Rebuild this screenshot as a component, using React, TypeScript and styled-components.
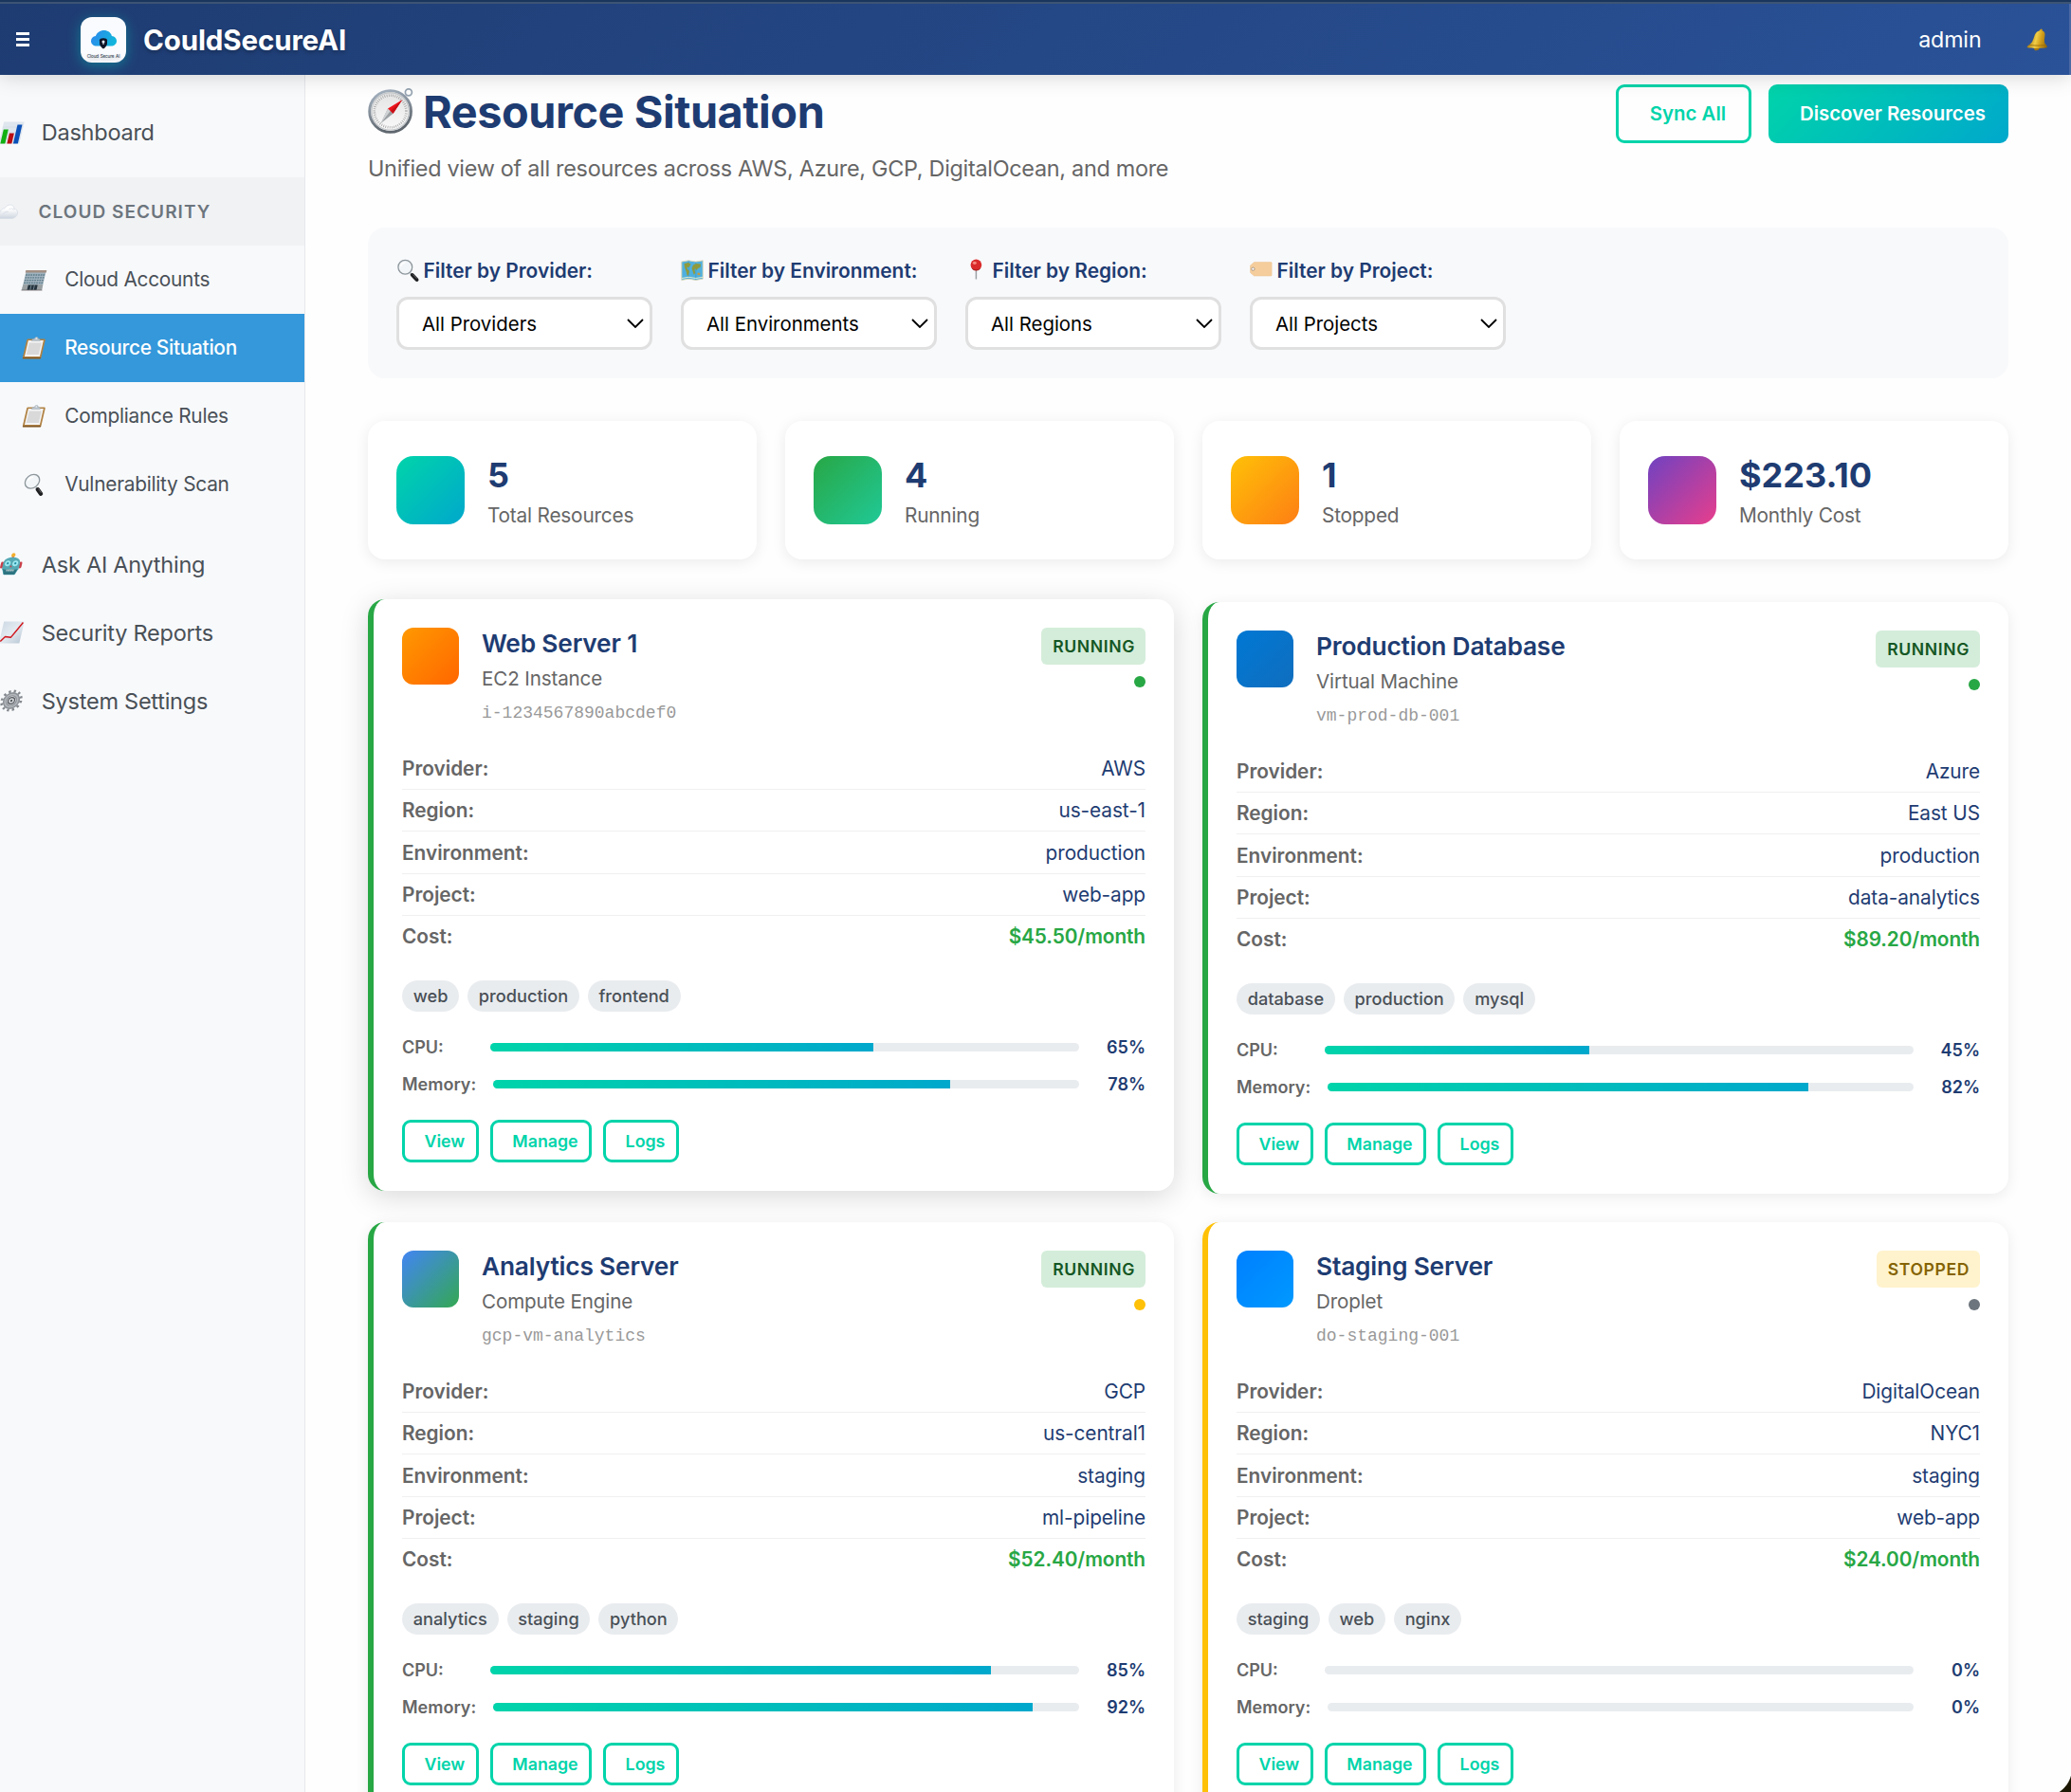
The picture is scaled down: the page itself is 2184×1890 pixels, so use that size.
import React from 'react';
import styled, { createGlobalStyle, css } from 'styled-components';

const GlobalStyle = createGlobalStyle`
  *, *::before, *::after { box-sizing: border-box; }
  html, body { margin: 0; padding: 0; }
  body {
    background: #fefefe;
    font-family: Inter, "Liberation Sans", sans-serif;
    color: #333;
    overflow: hidden;
  }
`;

const accent = '#00d4aa';
const navy = '#1e3c72';

/* ---------- Icons ---------- */

const IconSvg = styled.svg<{ $size?: number; $slant?: boolean }>`
  display: block;
  flex: none;
  width: ${(p) => p.$size ?? 24}px;
  height: ${(p) => p.$size ?? 24}px;
  overflow: visible;
  ${(p) => p.$slant && css`transform: skewX(-13deg);`}
`;

type IconProps = { slant?: boolean; size?: number };

const Chart = ({ slant, size }: IconProps) => (
  <IconSvg viewBox="0 0 24 24" $slant={slant} $size={size}>
    <rect x="1.5" y="0.5" width="21.5" height="23" fill="#dfe6ee" />
    <path d="M1.5 6h21.5M1.5 12h21.5M1.5 18h21.5" stroke="#cfd8e2" strokeWidth="0.6" />
    <rect x="3" y="8.5" width="5" height="15" fill="#12b012" />
    <rect x="10" y="12.5" width="5" height="11" fill="#b80d12" />
    <rect x="16.5" y="3.5" width="5" height="20" fill="#0a50b8" />
  </IconSvg>
);

const CloudIcon = ({ slant }: IconProps) => (
  <IconSvg viewBox="0 0 24 24" $slant={slant}>
    <defs>
      <linearGradient id="cloudFill" x1="0" y1="0" x2="0" y2="1">
        <stop offset="0.3" stopColor="#ffffff" />
        <stop offset="1" stopColor="#cdd5df" />
      </linearGradient>
    </defs>
    <path
      d="M6 19.5c-3 0-5-1.600-5-3.800 0-2 1.600-3.400 3.500-3.500 0-2.200 1.700-3.600 3.600-3.400C9 6.200 11 5 13.200 5c2.800 0 4.800 1.900 5 4.400 2.600 0 4.800 2 4.800 4.900 0 3-2.200 5.200-5.200 5.200z"
      fill="url(#cloudFill)"
      stroke="#d8dee6"
      strokeWidth="0.8"
    />
    <path d="M8 15c1-2.500 3-3.200 5-2.500M13 9.500c2-1 4-.5 5 1" fill="none" stroke="#dbe1e8" strokeWidth="0.9" />
  </IconSvg>
);

const Building = ({ slant }: IconProps) => (
  <IconSvg viewBox="0 0 24 24" $slant={slant}>
    <rect x="1.500" y="2.500" width="21" height="20.500" fill="#9fb2bd" />
    <path d="M1 2h22v2.600H1z" fill="#a39084" />
    <path d="M2 7h20M2 9.800h20M2 12.600h20M2 15.400h20" stroke="#5c7988" strokeWidth="1.300" strokeDasharray="1.700 0.900" />
    <rect x="1.500" y="17.200" width="21" height="5.800" fill="#9aa0a2" />
    <rect x="7" y="17.500" width="10" height="5.500" fill="#25343f" />
    <path d="M10.300 17.500v5.500M13.700 17.500v5.500" stroke="#8fa0aa" strokeWidth="0.700" />
    <path d="M1 23h22" stroke="#6d6a68" strokeWidth="0.800" />
  </IconSvg>
);

const Clipboard = ({ slant }: IconProps) => (
  <IconSvg viewBox="0 0 24 24" $slant={slant}>
    <rect x="2.200" y="2.500" width="19.600" height="21" rx="1.200" fill="#b08243" />
    <path d="M2.500 22.600h19" stroke="#7d5829" strokeWidth="1.300" />
    <rect x="4" y="4" width="16" height="17" fill="#f4f4f4" />
    <rect x="5.500" y="6.500" width="13" height="12.500" fill="#d9d9da" />
    <path d="M7.500 4.500c0-1.500 1.200-2 2.500-2.200C10.200 1 11 .5 12 .5s1.800.5 2 1.800c1.300.2 2.500.7 2.500 2.200z" fill="#b9c3cb" stroke="#98a4ad" strokeWidth="0.400" />
    <circle cx="12" cy="2" r="0.700" fill="#f8f9fc" />
  </IconSvg>
);

const Magnifier = ({ slant, size }: IconProps) => (
  <IconSvg viewBox="0 0 24 24" $slant={slant} $size={size}>
    <path d="M14.800 15.200l2.200 2" stroke="#9aa3a8" strokeWidth="2.200" />
    <path d="M16.800 17l4.700 5" stroke="#1d1f21" strokeWidth="4" strokeLinecap="round" />
    <path d="M17.500 16.500l4 4.300" stroke="#777c80" strokeWidth="0.700" />
    <circle cx="9.300" cy="8.800" r="7.400" fill="#f3f6f8" stroke="#8d979d" strokeWidth="1.300" />
    <path d="M4.600 7.800c.6-2.300 2.300-3.500 4.600-3.500" fill="none" stroke="#ffffff" strokeWidth="1.400" />
  </IconSvg>
);

const Robot = ({ slant }: IconProps) => (
  <IconSvg viewBox="0 0 24 24" $slant={slant}>
    <path d="M12 3.500V6" stroke="#d94c3d" strokeWidth="2" />
    <circle cx="12" cy="2.400" r="2.100" fill="#f3ae2c" />
    <rect x="0.800" y="9.500" width="3" height="7" rx="1.400" fill="#c9404a" />
    <rect x="20.200" y="9.500" width="3" height="7" rx="1.400" fill="#c9404a" />
    <path d="M12 4.800c5.500 0 8.800 2.300 8.800 6.500v5.500c0 .8-.3 1.200-.9 1.700l-1.500 3.700c-.3.800-.8 1.100-1.600 1.100H7.200c-.8 0-1.300-.3-1.600-1.100l-1.500-3.700c-.6-.5-.9-.9-.9-1.700v-5.500c0-4.200 3.300-6.500 8.800-6.500z" fill="#54a9b4" />
    <path d="M4.200 17c2 1.200 13.600 1.200 15.600 0l-1.800 5c-.3.700-.6 1-1.300 1H7.300c-.7 0-1-.3-1.300-1z" fill="#2d7481" />
    <circle cx="8" cy="11.200" r="2.700" fill="#8fe9f5" stroke="#c5f3f8" strokeWidth="0.500" />
    <circle cx="16" cy="11.200" r="2.700" fill="#8fe9f5" stroke="#c5f3f8" strokeWidth="0.500" />
    <circle cx="8" cy="11.200" r="1.100" fill="#2d8b9c" />
    <circle cx="16" cy="11.200" r="1.100" fill="#2d8b9c" />
    <path d="M12 13l-1.200 2.200h2.400z" fill="#c9404a" />
    <rect x="8" y="17.600" width="8" height="2" rx="0.600" fill="#c3d2d4" />
    <path d="M9.700 17.300V20M12 17.300V20M14.300 17.300V20" stroke="#2d7481" strokeWidth="0.600" />
  </IconSvg>
);

const Trend = ({ slant }: IconProps) => (
  <IconSvg viewBox="0 0 24 24" $slant={slant}>
    <defs>
      <linearGradient id="paper" x1="0" y1="0" x2="1" y2="1">
        <stop offset="0" stopColor="#cfdbe6" />
        <stop offset="0.500" stopColor="#e4eaf0" />
        <stop offset="1" stopColor="#bccbd8" />
      </linearGradient>
    </defs>
    <rect x="1.500" y="0.500" width="21.500" height="23" fill="url(#paper)" />
    <path d="M2.500 21.500L6.500 16.500l6 .8 4.500-7.300L22 1.500" fill="none" stroke="#d0161d" strokeWidth="1.500" strokeLinejoin="round" />
  </IconSvg>
);

const Gear = ({ slant }: IconProps) => (
  <IconSvg viewBox="0 0 24 24" $slant={slant}>
    <circle cx="12" cy="12" r="10" fill="none" stroke="#83888e" strokeWidth="2.800" strokeDasharray="2.300 2.936" />
    <circle cx="12" cy="12" r="6.700" fill="none" stroke="#8d9298" strokeWidth="4.400" />
    <circle cx="12" cy="12" r="6.600" fill="none" stroke="#b4b8bd" strokeWidth="1.500" />
    <circle cx="12" cy="12" r="3.400" fill="#cfd2d5" stroke="#575b61" strokeWidth="1.200" />
    <circle cx="12" cy="12" r="1.100" fill="#3c4046" />
  </IconSvg>
);

const Bell = ({ slant, size }: IconProps) => (
  <IconSvg viewBox="0 0 24 24" $slant={slant} $size={size}>
    <defs>
      <linearGradient id="brass" x1="0" y1="0" x2="1" y2="0">
        <stop offset="0" stopColor="#a87a10" />
        <stop offset="0.350" stopColor="#f2cf47" />
        <stop offset="0.600" stopColor="#d2a01c" />
        <stop offset="1" stopColor="#8b6108" />
      </linearGradient>
    </defs>
    <circle cx="12" cy="1.900" r="1.500" fill="#c9991d" />
    <ellipse cx="12" cy="21.500" rx="2.600" ry="1.800" fill="#a5780f" />
    <path d="M12 2.300c3.400 0 5.300 2.400 5.500 5.700.3 5 1.200 7.600 3.300 9.300 1.400 1.100 2 1.900 1.700 2.800-.6 1.200-20.400 1.200-21 0-.3-.9.300-1.700 1.700-2.800 2.100-1.700 3-4.300 3.300-9.300.2-3.300 2.100-5.700 5.500-5.700z" fill="url(#brass)" />
    <path d="M3.300 17.300c4 1 13.400 1 17.400 0" fill="none" stroke="#97690b" strokeWidth="0.800" />
  </IconSvg>
);

const MapIcon = () => (
  <IconSvg viewBox="0 0 24 24">
    <path d="M0.800 3l7.400-1.200 7.600 1.200 7.400-1.200v19.400l-7.400 1.200-7.600-1.200-7.400 1.200z" fill="#4fb0de" />
    <path d="M8.200 1.800v19.400M15.800 3v19.400" stroke="#3f94bd" strokeWidth="0.600" />
    <path d="M3.500 5l4.500-1 2.500 1.500-1.500 3-2.500.5.500 2 2 2-1 4-1.200 1-1.300-5L4 9zM13 6.500l3-1.500 5 .5-.5 3.500-2.500 1-1.300 2-1.700-2-.5 2.500.8 2-1.500 2.500-1.300-4-1-3z" fill="#8f9a3c" />
    <path d="M17.800 14.500l2.700.5-.5 2.200-2.700-.5z" fill="#c99a3c" />
    <path d="M1 20.500l7.200-1.200 7.600 1.200 7.400-1.200" fill="none" stroke="#e2ecd0" strokeWidth="1" />
    <path d="M0.800 3l7.400-1.200 7.600 1.200 7.400-1.200v19.400l-7.400 1.200-7.600-1.200-7.400 1.200z" fill="none" stroke="#e0d7b2" strokeWidth="0.900" />
  </IconSvg>
);

const Pin = () => (
  <IconSvg viewBox="0 0 24 24">
    <path d="M11.400 10v11.500" stroke="#9ba0a5" strokeWidth="1.500" />
    <circle cx="11.400" cy="6.400" r="5.800" fill="#d92b2b" />
    <ellipse cx="9.800" cy="4.300" rx="2" ry="1.600" fill="#f58a80" />
    <path d="M7.300 10.500c2 2 6.200 2 8.200 0" fill="none" stroke="#9c1717" strokeWidth="1" />
  </IconSvg>
);

const TagIcon = () => (
  <IconSvg viewBox="0 0 24 24">
    <path d="M4.500 3.500H22.300c.5 0 .8.300.8.800v12.900c0 .5-.3.800-.8.800H4.500L.5 14.500V7z" fill="#f5cd9c" stroke="#eac08c" strokeWidth="0.500" />
    <circle cx="3.400" cy="10.700" r="1.600" fill="#fff" stroke="#a08f80" strokeWidth="0.900" />
  </IconSvg>
);

const CompassSvg = styled.svg`
  display: block;
  flex: none;
  width: 48px;
  height: 48px;
  margin-bottom: 2px;
  overflow: visible;
`;

const Compass = () => (
  <CompassSvg viewBox="0 0 48 48">
    <defs>
      <linearGradient id="rim" x1="0" y1="0" x2="0.300" y2="1">
        <stop offset="0" stopColor="#a9b7c6" />
        <stop offset="1" stopColor="#5f666e" />
      </linearGradient>
      <linearGradient id="dial" x1="0" y1="0" x2="0" y2="1">
        <stop offset="0" stopColor="#e3e3e3" />
        <stop offset="1" stopColor="#fafafa" />
      </linearGradient>
    </defs>
    <circle cx="42.900" cy="4.300" r="3.500" fill="none" stroke="#95a3b1" strokeWidth="1.700" />
    <circle cx="23.600" cy="24.500" r="21.900" fill="url(#dial)" stroke="url(#rim)" strokeWidth="2.900" />
    <circle cx="23.600" cy="24.500" r="19.700" fill="none" stroke="#c3c6c9" strokeWidth="1.200" />
    <circle cx="23.600" cy="24.500" r="16.800" fill="none" stroke="#8f8f8f" strokeWidth="2.600" strokeDasharray="0.600 1.599" />
    <path d="M21 21.500l5.600 5.200L13.700 37z" fill="#9a9fa3" />
    <path d="M21 21.500l2.700 2.500-10 13z" fill="#d0d3d5" />
    <path d="M36.200 12.200L21 21.500l5.600 5.200z" fill="#ee141c" />
    <path d="M36.200 12.200L23.900 24l2.700 2.700z" fill="#c80f16" />
  </CompassSvg>
);

const LogoText = styled.text`
  font-family: Inter, sans-serif;
  font-size: 4.600px;
  font-weight: 500;
  word-spacing: 0.600px;
  fill: #3c4a5a;
`;

const LogoSvg = styled.svg`
  display: block;
  flex: none;
  width: 48px;
  height: 48px;
  border-radius: 12px;
  background: #f9fbfe;
  box-shadow: 0 3px 14px rgba(0, 212, 190, 0.4);
`;

const Logo = () => (
  <LogoSvg viewBox="0 0 48 48">
    <defs>
      <linearGradient id="logoCloud" x1="0" y1="0" x2="1" y2="0.300">
        <stop offset="0" stopColor="#2f86ee" />
        <stop offset="1" stopColor="#12b4dc" />
      </linearGradient>
    </defs>
    <path d="M17 30.500c-3.500 0-6-2.200-6-5.300 0-2.900 2-5 4.900-5.300C17.200 16.400 20.500 14 24.600 14c4.200 0 7.300 2.300 8.300 5.900 3 .3 5.100 2.400 5.100 5.300 0 3.100-2.500 5.300-6 5.300z" fill="url(#logoCloud)" />
    <path d="M24 22.300c2.400 0 4 1 4 1.900v3.600c0 2.300-2.100 4.600-4 5.700-1.900-1.100-4-3.400-4-5.700v-3.600c0-.9 1.600-1.900 4-1.900z" fill="#101426" />
    <circle cx="24" cy="25.900" r="1.500" fill="#e9f3ff" />
    <path d="M24 26l.8 2.700h-1.600z" fill="#e9f3ff" />
    <LogoText x="6.800" y="42.700" textLength="34.500">Cloud Secure AI</LogoText>
  </LogoSvg>
);

/* ---------- Shell ---------- */

const Page = styled.div`
  display: flex;
  flex-direction: column;
  width: 2184px;
  height: 1890px;
  overflow: hidden;
  background: #fefefe;

  &::after {
    content: '';
    position: fixed;
    right: 0;
    bottom: 0;
    width: 30px;
    height: 25px;
    background: radial-gradient(circle at 1px 0, transparent 29.500px, #1c1703 30.500px);
  }
`;

const TopBar = styled.header`
  position: relative;
  z-index: 2;
  flex: none;
  display: flex;
  align-items: center;
  justify-content: space-between;
  height: 79px;
  padding: 4px 22px 0 17px;
  background:
    linear-gradient(#1a365d 0 2px, #3d5474 2px 4px) 0 0 / 100% 4px no-repeat,
    linear-gradient(#4b69a3, #4b69a3) 100% 0 / 2px 100% no-repeat,
    linear-gradient(135deg, #1e3c72 0%, #2a5298 100%);
  box-shadow: 0 3px 20px rgba(0, 0, 0, 0.15);
  color: #fff;
`;

const BarGroup = styled.div<{ $gap: number }>`
  display: flex;
  align-items: center;
  gap: ${(p) => p.$gap}px;
`;

const MenuButton = styled.button`
  display: grid;
  gap: 3px;
  width: 14px;
  padding: 0;
  border: 0;
  background: none;
`;

const MenuLine = styled.span`
  height: 3px;
  background: #fff;
`;

const Brand = styled.div`
  display: flex;
  align-items: center;
  gap: 18px;
  font-size: 29.500px;
  font-weight: 700;
  letter-spacing: -0.120px;
  line-height: 36px;
  text-shadow: 0 2px 4px rgba(0, 0, 0, 0.3);
`;

const UserName = styled.span`
  padding-top: 1px;
  font-size: 23.200px;
  letter-spacing: -0.100px;
  line-height: 36px;
`;

const Body = styled.div`
  flex: 1;
  display: flex;
  min-height: 0;
`;

const Sidebar = styled.nav`
  flex: none;
  width: 322px;
  padding-top: 24.500px;
  background: #f8f9fb;
  border-right: 1px solid #e6e8eb;
`;

const NavItem = styled.a`
  display: flex;
  align-items: center;
  gap: 19.800px;
  height: 72px;
  color: #495057;
  font-size: 23.500px;
  letter-spacing: -0.250px;
  white-space: nowrap;
`;

const NavSection = styled.div`
  display: flex;
  align-items: center;
  gap: 20.500px;
  height: 72px;
  margin-top: 11px;
  padding: 1px 10px 0 0;
  background: #f1f2f4;
  color: #6c757d;
  font-size: 19px;
  font-weight: 600;
  letter-spacing: 1.050px;
  white-space: nowrap;

  & > svg { margin-left: -4px; }
`;

const SubItem = styled(NavItem)<{ $active?: boolean }>`
  gap: 20.200px;
  padding-left: 24px;
  font-size: 20.800px;
  letter-spacing: ${(p) => (p.$active ? -0.270 : -0.230)}px;
  font-weight: ${(p) => (p.$active ? 500 : 400)};
  background: ${(p) => (p.$active ? '#3498db' : 'transparent')};
  color: ${(p) => (p.$active ? '#fff' : '#495057')};
`;

const NavGroup = styled.div`
  margin-bottom: 12.500px;
`;

const Content = styled.main`
  flex: 1;
  padding: 3px 66px 0;
`;

/* ---------- Heading ---------- */

const PageHead = styled.div`
  display: flex;
  justify-content: space-between;
  align-items: flex-start;
  margin-bottom: 44.500px;
`;

const Title = styled.h1`
  display: flex;
  align-items: center;
  gap: 10px;
  margin: 0;
  color: ${navy};
  font-size: 46.800px;
  font-weight: 700;
  letter-spacing: -0.420px;
  line-height: 72px;
`;

const Subtitle = styled.p`
  margin: 5.500px 0 0;
  color: #666;
  font-size: 23.400px;
  letter-spacing: -0.285px;
  line-height: 36px;
`;

const Actions = styled.div`
  display: flex;
  gap: 18px;
  padding-top: 7px;
`;

const Button = styled.button<{ $primary?: boolean }>`
  height: 62px;
  border-radius: 9px;
  font-family: inherit;
  font-size: 20.400px;
  font-weight: 600;
  ${(p) =>
    p.$primary
      ? css`
          width: 253px;
          padding: 0 22px 2px 31px;
          border: 0;
          background: linear-gradient(135deg, ${accent} 0%, #00a8cc 100%);
          color: #fff;
        `
      : css`
          width: 143px;
          padding: 0 22px 2px 31px;
          border: 3px solid ${accent};
          background: transparent;
          color: ${accent};
        `}
`;

/* ---------- Filters ---------- */

const FilterPanel = styled.section`
  display: flex;
  gap: 30px;
  height: 159px;
  margin-bottom: 45px;
  padding: 30px;
  border-radius: 18px;
  background: #f8f9fb;
`;

const Filter = styled.div`
  width: 270px;
`;

const FilterLabel = styled.label`
  display: flex;
  align-items: center;
  gap: 4.500px;
  margin-bottom: 12px;
  padding-top: 1px;
  color: ${navy};
  font-size: 20.900px;
  font-weight: 600;
  line-height: 30px;
  white-space: nowrap;

  & > svg { margin-bottom: 2px; }
`;

const SelectBox = styled.div`
  display: flex;
  align-items: center;
  justify-content: space-between;
  height: 56px;
  padding: 0 6px 0 24px;
  border: 3px solid #e0e0e0;
  border-radius: 12px;
  background: #fff;
  color: #000;
  font-size: 20.400px;
`;

const Chevron = styled.svg`
  width: 18px;
  height: 10px;
`;

/* ---------- Stats ---------- */

const Stats = styled.section`
  display: grid;
  grid-template-columns: repeat(4, 1fr);
  gap: 30px;
  margin-bottom: 45px;
`;

const StatCard = styled.div`
  display: flex;
  align-items: center;
  gap: 24px;
  height: 146px;
  padding: 30px;
  border-radius: 18px;
  background: #fff;
  box-shadow: 0 3px 15px rgba(0, 0, 0, 0.08);
`;

const Swatch = styled.div<{ $size: number; $radius: number; $from: string; $to: string }>`
  flex: none;
  width: ${(p) => p.$size}px;
  height: ${(p) => p.$size}px;
  border-radius: ${(p) => p.$radius}px;
  background: linear-gradient(135deg, ${(p) => p.$from}, ${(p) => p.$to});
`;

const StatValue = styled.div`
  color: ${navy};
  font-size: 36px;
  font-weight: 700;
  line-height: 50px;
`;

const StatLabel = styled.div`
  margin-top: 3px;
  color: #666;
  font-size: 20.800px;
  letter-spacing: -0.200px;
  line-height: 29px;
`;

/* ---------- Resource cards ---------- */

const Cards = styled.section`
  display: grid;
  grid-template-columns: repeat(2, 1fr);
  gap: 30px;
`;

const Card = styled.article<{ $edge: string; $raised?: boolean }>`
  height: 624px;
  padding: 30px;
  border-left: 6px solid ${(p) => p.$edge};
  border-radius: 18px;
  background: #fff;
  box-shadow: ${(p) => (p.$raised ? '0 6px 30px rgba(0, 0, 0, 0.15)' : '0 3px 15px rgba(0, 0, 0, 0.08)')};
  ${(p) => p.$raised && css`transform: translateY(-3px);`}
`;

const CardHead = styled.div`
  display: flex;
  align-items: flex-start;
  gap: 24px;
  height: 104px;
  margin-bottom: 22.600px;
`;

const CardInfo = styled.div`
  flex: 1;
`;

const CardTitle = styled.h3`
  margin: 0 0 5px;
  color: ${navy};
  font-size: 26.300px;
  font-weight: 600;
  letter-spacing: -0.180px;
  line-height: 33px;
`;

const CardType = styled.div`
  margin-bottom: 8px;
  color: #666;
  font-size: 20.600px;
  letter-spacing: -0.130px;
  line-height: 31px;
`;

const CardId = styled.div`
  color: #999;
  font-family: "Liberation Mono", monospace;
  font-size: 18px;
  line-height: 27px;
`;

const StatusColumn = styled.div`
  display: flex;
  flex-direction: column;
  align-items: flex-end;
  gap: 12px;
`;

const Badge = styled.span<{ $stopped?: boolean }>`
  height: 39px;
  padding: 0 11px 0 12px;
  border-radius: 6px;
  background: ${(p) => (p.$stopped ? '#fff3cd' : '#d4edda')};
  color: ${(p) => (p.$stopped ? '#856404' : '#155724')};
  font-size: 17.600px;
  font-weight: 600;
  letter-spacing: 0.600px;
  line-height: 39px;
`;

const Dot = styled.span<{ $color: string }>`
  width: 12px;
  height: 12px;
  border-radius: 50%;
  background: ${(p) => p.$color};
`;

const Row = styled.div`
  display: flex;
  align-items: center;
  justify-content: space-between;
  height: 44.400px;
  border-bottom: 1px solid #f0f0f0;
  font-size: 20.800px;

  &:last-child {
    height: 43.400px;
    border-bottom: 0;
  }
`;

const RowLabel = styled.span`
  color: #666;
  font-weight: 600;
`;

const RowValue = styled.span<{ $cost?: boolean }>`
  color: ${(p) => (p.$cost ? '#28a745' : navy)};
  font-weight: ${(p) => (p.$cost ? 600 : 400)};
  letter-spacing: ${(p) => (p.$cost ? -0.080 : -0.080)}px;
`;

const Tags = styled.div`
  display: flex;
  gap: 9px;
  margin-top: 24.400px;
`;

const Tag = styled.span`
  height: 33px;
  padding: 0 11.700px;
  border-radius: 17px;
  background: #e9ecef;
  color: #495057;
  font-size: 18.200px;
  font-weight: 500;
  line-height: 33px;
`;

const Metrics = styled.div`
  display: grid;
  gap: 12px;
  margin: 24px 0;
`;

const Metric = styled.div`
  display: flex;
  align-items: center;
  gap: 18px;
  font-size: 18px;
  font-weight: 600;
  line-height: 27px;
`;

const MetricLabel = styled.span`
  min-width: 75px;
  color: #666;
`;

const Track = styled.div`
  flex: 1;
  height: 9px;
  border-radius: 5px;
  background: #e9ecef;
  overflow: hidden;
`;

const Fill = styled.div`
  height: 100%;
  background: linear-gradient(90deg, ${accent}, #00a8cc);
`;

const MetricValue = styled.span`
  min-width: 52px;
  color: ${navy};
  text-align: right;
`;

const CardActions = styled.div`
  display: flex;
  gap: 12px;
`;

const SmallButton = styled.button`
  height: 45px;
  padding: 0 11.500px 0 20.500px;
  border: 3px solid ${accent};
  border-radius: 9px;
  background: transparent;
  color: ${accent};
  font-family: inherit;
  font-size: 17.800px;
  font-weight: 600;
`;

/* ---------- Data ---------- */

const filters = [
  { icon: <Magnifier />, label: 'Filter by Provider:', value: 'All Providers' },
  { icon: <MapIcon />, label: 'Filter by Environment:', value: 'All Environments' },
  { icon: <Pin />, label: 'Filter by Region:', value: 'All Regions' },
  { icon: <TagIcon />, label: 'Filter by Project:', value: 'All Projects' },
];

const stats = [
  { value: '5', label: 'Total Resources', from: '#00d4aa', to: '#00a8cc' },
  { value: '4', label: 'Running', from: '#28a745', to: '#20c997' },
  { value: '1', label: 'Stopped', from: '#ffc107', to: '#fd7e14' },
  { value: '$223.10', label: 'Monthly Cost', from: '#6f42c1', to: '#e83e8c' },
];

type Resource = {
  name: string;
  type: string;
  id: string;
  from: string;
  to: string;
  stopped?: boolean;
  raised?: boolean;
  dot: string;
  details: [string, string][];
  tags: string[];
  cpu: number;
  memory: number;
};

const resources: Resource[] = [
  {
    name: 'Web Server 1', type: 'EC2 Instance', id: 'i-1234567890abcdef0',
    from: '#ff9900', to: '#ff6600', raised: true, dot: '#28a745',
    details: [['Provider', 'AWS'], ['Region', 'us-east-1'], ['Environment', 'production'], ['Project', 'web-app'], ['Cost', '$45.50/month']],
    tags: ['web', 'production', 'frontend'], cpu: 65, memory: 78,
  },
  {
    name: 'Production Database', type: 'Virtual Machine', id: 'vm-prod-db-001',
    from: '#0078d4', to: '#106ebe', dot: '#28a745',
    details: [['Provider', 'Azure'], ['Region', 'East US'], ['Environment', 'production'], ['Project', 'data-analytics'], ['Cost', '$89.20/month']],
    tags: ['database', 'production', 'mysql'], cpu: 45, memory: 82,
  },
  {
    name: 'Analytics Server', type: 'Compute Engine', id: 'gcp-vm-analytics',
    from: '#4285f4', to: '#34a853', dot: '#ffc107',
    details: [['Provider', 'GCP'], ['Region', 'us-central1'], ['Environment', 'staging'], ['Project', 'ml-pipeline'], ['Cost', '$52.40/month']],
    tags: ['analytics', 'staging', 'python'], cpu: 85, memory: 92,
  },
  {
    name: 'Staging Server', type: 'Droplet', id: 'do-staging-001',
    from: '#0080ff', to: '#0099ff', stopped: true, dot: '#6c757d',
    details: [['Provider', 'DigitalOcean'], ['Region', 'NYC1'], ['Environment', 'staging'], ['Project', 'web-app'], ['Cost', '$24.00/month']],
    tags: ['staging', 'web', 'nginx'], cpu: 0, memory: 0,
  },
];

const Usage = ({ label, value }: { label: string; value: number }) => (
  <Metric>
    <MetricLabel>{label}</MetricLabel>
    <Track>
      <Fill style={{ width: `${value}%` }} />
    </Track>
    <MetricValue>{value}%</MetricValue>
  </Metric>
);

const ResourceCard = ({ r }: { r: Resource }) => (
  <Card $edge={r.stopped ? '#ffc107' : '#28a745'} $raised={r.raised}>
    <CardHead>
      <Swatch $size={60} $radius={12} $from={r.from} $to={r.to} />
      <CardInfo>
        <CardTitle>{r.name}</CardTitle>
        <CardType>{r.type}</CardType>
        <CardId>{r.id}</CardId>
      </CardInfo>
      <StatusColumn>
        <Badge $stopped={r.stopped}>{r.stopped ? 'STOPPED' : 'RUNNING'}</Badge>
        <Dot $color={r.dot} />
      </StatusColumn>
    </CardHead>
    <div>
      {r.details.map(([k, v]) => (
        <Row key={k}>
          <RowLabel>{k}:</RowLabel>
          <RowValue $cost={k === 'Cost'}>{v}</RowValue>
        </Row>
      ))}
    </div>
    <Tags>
      {r.tags.map((t) => (
        <Tag key={t}>{t}</Tag>
      ))}
    </Tags>
    <Metrics>
      <Usage label="CPU:" value={r.cpu} />
      <Usage label="Memory:" value={r.memory} />
    </Metrics>
    <CardActions>
      <SmallButton>View</SmallButton>
      <SmallButton>Manage</SmallButton>
      <SmallButton>Logs</SmallButton>
    </CardActions>
  </Card>
);

export default function App() {
  return (
    <Page>
      <GlobalStyle />
      <TopBar>
        <BarGroup $gap={54}>
          <MenuButton aria-label="Menu">
            <MenuLine />
            <MenuLine />
            <MenuLine />
          </MenuButton>
          <Brand>
            <Logo />
            CouldSecureAI
          </Brand>
        </BarGroup>
        <BarGroup $gap={48.5}>
          <UserName>admin</UserName>
          <Bell slant />
        </BarGroup>
      </TopBar>
      <Body>
        <Sidebar>
          <NavItem><Chart slant />Dashboard</NavItem>
          <NavGroup>
            <NavSection><CloudIcon slant />CLOUD SECURITY</NavSection>
            <SubItem><Building slant />Cloud Accounts</SubItem>
            <SubItem $active><Clipboard slant />Resource Situation</SubItem>
            <SubItem><Clipboard slant />Compliance Rules</SubItem>
            <SubItem><Magnifier slant />Vulnerability Scan</SubItem>
          </NavGroup>
          <NavItem><Robot slant />Ask AI Anything</NavItem>
          <NavItem><Trend slant />Security Reports</NavItem>
          <NavItem><Gear slant />System Settings</NavItem>
        </Sidebar>
        <Content>
          <PageHead>
            <div>
              <Title><Compass />Resource Situation</Title>
              <Subtitle>Unified view of all resources across AWS, Azure, GCP, DigitalOcean, and more</Subtitle>
            </div>
            <Actions>
              <Button>Sync All</Button>
              <Button $primary>Discover Resources</Button>
            </Actions>
          </PageHead>
          <FilterPanel>
            {filters.map((f) => (
              <Filter key={f.label}>
                <FilterLabel>{f.icon}{f.label}</FilterLabel>
                <SelectBox>
                  {f.value}
                  <Chevron viewBox="0 0 18 10">
                    <path d="M1 1l8 8 8-8" fill="none" stroke="#000" strokeWidth="1.800" />
                  </Chevron>
                </SelectBox>
              </Filter>
            ))}
          </FilterPanel>
          <Stats>
            {stats.map((s) => (
              <StatCard key={s.label}>
                <Swatch $size={72} $radius={18} $from={s.from} $to={s.to} />
                <div>
                  <StatValue>{s.value}</StatValue>
                  <StatLabel>{s.label}</StatLabel>
                </div>
              </StatCard>
            ))}
          </Stats>
          <Cards>
            {resources.map((r) => (
              <ResourceCard key={r.id} r={r} />
            ))}
          </Cards>
        </Content>
      </Body>
    </Page>
  );
}
